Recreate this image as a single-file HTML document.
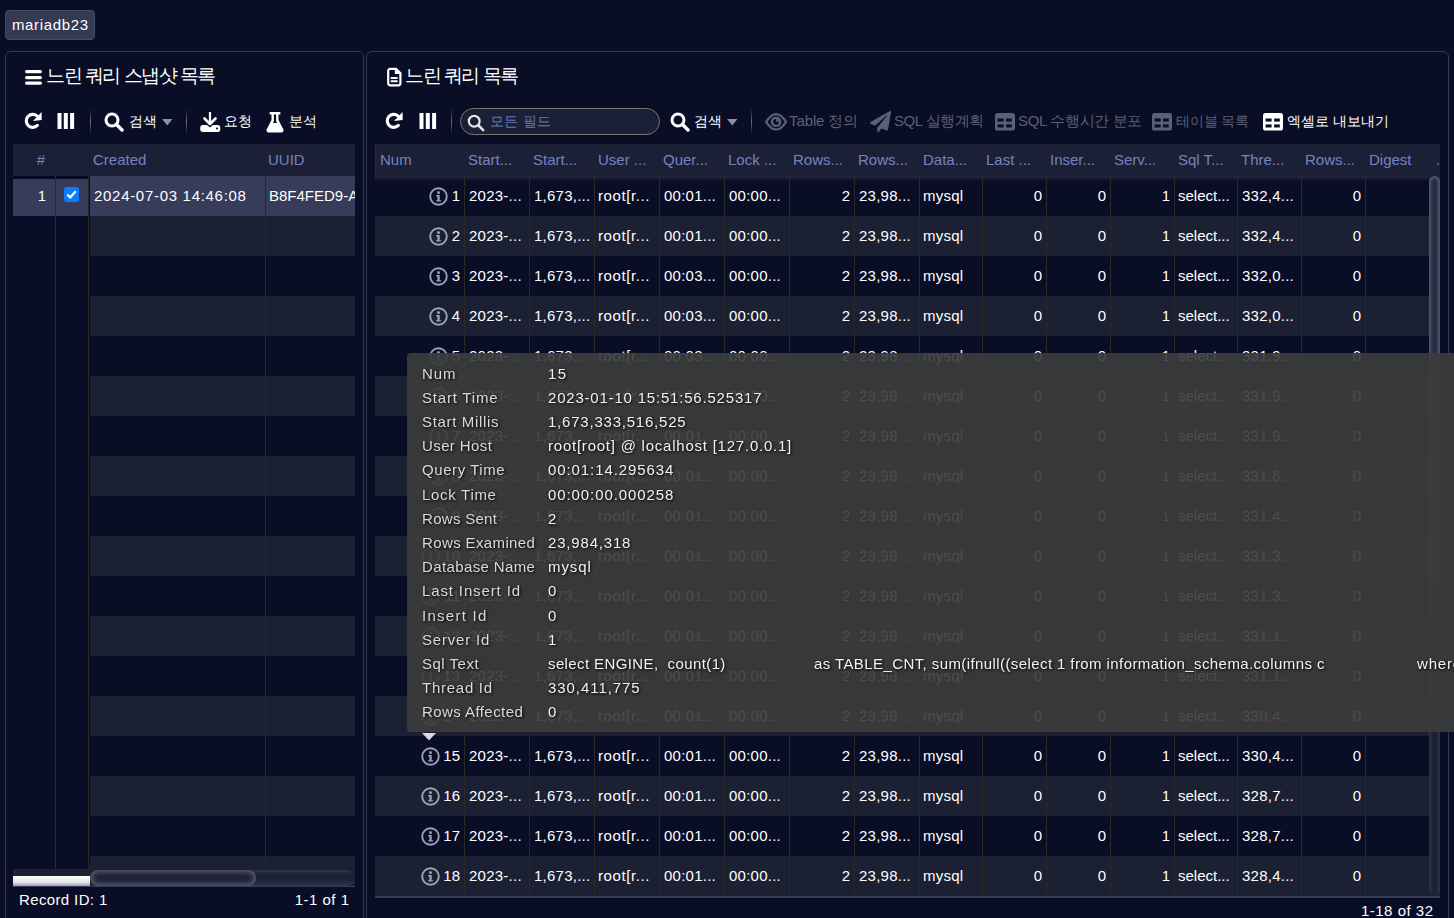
<!DOCTYPE html>
<html><head><meta charset="utf-8"><title>slow query</title><style>
*{box-sizing:border-box;margin:0;padding:0}
html,body{width:1454px;height:918px;overflow:hidden;background:#090d26;font-family:"Liberation Sans", sans-serif;color:#fff}
.a{position:absolute}
.ic{position:absolute;display:block}
.sep{position:absolute;width:1px;background:linear-gradient(to bottom, rgba(120,120,120,0), #6e6e6e 50%, rgba(120,120,120,0))}
.tb{position:absolute;font-size:15px;line-height:20px;white-space:nowrap;color:#fff}
.tbd{position:absolute;font-size:15px;line-height:20px;white-space:nowrap;color:#5c6076}
.title{position:absolute;font-size:19px;letter-spacing:-1.5px;line-height:24px;white-space:nowrap;color:#fff}
.panel{position:absolute;border:1px solid #333954;border-radius:6px}
.hd{position:absolute;background:#1c2036}
.ht{position:absolute;font-size:15px;line-height:32px;color:#7682c0;white-space:nowrap;overflow:hidden}
.row{position:absolute;height:40px}
.c{position:absolute;font-size:15px;line-height:40px;white-space:nowrap;overflow:hidden;color:#fff}
.r{text-align:right}
.vl{position:absolute;width:1px;background:#282825}
.tip{position:absolute;font-size:15px;line-height:24px;white-space:nowrap;color:#f2f2f2;text-shadow:1px 1px 3px #000}
</style></head>
<body>
<div class="a" style="left:5px;top:10px;width:90px;height:30px;background:#343a52;border:1px solid #464c66;border-radius:4px;font-size:15px;line-height:28px;text-align:center;color:#fff;letter-spacing:0.65px;text-indent:0.65px">mariadb23</div>
<div class="panel" style="left:5px;top:51px;width:359px;height:900px"></div>
<div class="panel" style="left:366px;top:51px;width:1083px;height:900px"></div>
<svg class="ic" style="left:25px;top:70px" width="18" height="15" viewBox="0 0 18 15"><rect x="0" y="0" width="17" height="3.2" rx="1.6" fill="#fff"/><rect x="0" y="6" width="17" height="3.2" rx="1.6" fill="#fff"/><rect x="0" y="11.5" width="17" height="3.2" rx="1.6" fill="#fff"/></svg>
<div class="title" style="left:46px;top:64px;">느린 쿼리 스냅샷 목록</div>
<svg class="ic" style="left:23px;top:109px" width="20" height="20" viewBox="0 0 20 20"><path d="M13.93 6.87 A6.5 6.5 0 1 0 14.35 16.45" fill="none" stroke="#fff" stroke-width="3.1" stroke-linecap="round"/><path d="M18.6 2.9 L18.6 11.1 L10 11.9 Z" fill="#fff"/></svg>
<svg class="ic" style="left:57px;top:113px" width="18" height="17" viewBox="0 0 18 17"><rect x="0.5" y="0" width="4" height="16" fill="#fff"/><rect x="6.8" y="0" width="4" height="16" fill="#fff"/><rect x="13.1" y="0" width="4" height="16" fill="#fff"/></svg>
<div class="sep" style="left:90px;top:108px;height:27px"></div>
<svg class="ic" style="left:104px;top:112px" width="20" height="20" viewBox="0 0 20 20"><circle cx="8" cy="8" r="6" fill="none" stroke="#fff" stroke-width="3"/><path d="M12.5 12.5 L18 18" stroke="#fff" stroke-width="3.4" stroke-linecap="round"/></svg>
<div class="tb" style="left:129px;top:111px;font-size:14px">검색</div>
<svg class="ic" style="left:162px;top:119px" width="11" height="7" viewBox="0 0 11 7"><path d="M0 0 L10.5 0 L5.25 6.5 Z" fill="#8c92a4"/></svg>
<div class="sep" style="left:186px;top:108px;height:27px"></div>
<svg class="ic" style="left:200px;top:112px" width="21" height="21" viewBox="0 0 21 21"><path d="M10 0.5 L10 11" stroke="#fff" stroke-width="2.2" stroke-linecap="round"/><path d="M4.5 6.5 L10 12 L15.5 6.5" fill="none" stroke="#fff" stroke-width="2.6" stroke-linecap="round" stroke-linejoin="round"/><path d="M2.5 13 L7 13 L10 15.5 L13 13 L18 13 A2.5 2.5 0 0 1 20.3 15.5 L20.3 17.5 A2.5 2.5 0 0 1 18 20 L2.5 20 A2.5 2.5 0 0 1 0.2 17.5 L0.2 15.5 A2.5 2.5 0 0 1 2.5 13 Z" fill="#fff"/><circle cx="17" cy="16.5" r="1" fill="#090d26"/></svg>
<div class="tb" style="left:224px;top:111px;font-size:14px">요청</div>
<svg class="ic" style="left:266px;top:112px" width="18" height="21" viewBox="0 0 18 21"><rect x="3.5" y="0" width="11" height="2.6" rx="1" fill="#fff"/><path d="M5.5 2 L5.5 8 L0.6 17.5 A2.2 2.2 0 0 0 2.6 20.5 L15.4 20.5 A2.2 2.2 0 0 0 17.4 17.5 L12.5 8 L12.5 2 Z" fill="#fff"/><path d="M7.9 2.5 L7.9 9 L7 11 L11 11 L10.1 9 L10.1 2.5 Z" fill="#090d26"/></svg>
<div class="tb" style="left:289px;top:111px;font-size:14px">분석</div>
<div class="hd" style="left:13px;top:144px;width:342px;height:32px"></div>
<div class="a" style="left:13px;top:176px;width:76px;height:3px;background:#080c22"></div>
<div class="ht" style="left:20px;top:144px;width:42px;text-align:center">#</div>
<div class="ht" style="left:93px;top:144px;width:170px">Created</div>
<div class="ht" style="left:268px;top:144px;width:87px">UUID</div>
<div class="row" style="left:90px;top:176px;width:265px;height:40px;background:#363c5a"></div>
<div class="row" style="left:90px;top:216px;width:265px;height:40px;background:#1c2033"></div>
<div class="row" style="left:90px;top:256px;width:265px;height:40px;background:#090d26"></div>
<div class="row" style="left:90px;top:296px;width:265px;height:40px;background:#1c2033"></div>
<div class="row" style="left:90px;top:336px;width:265px;height:40px;background:#090d26"></div>
<div class="row" style="left:90px;top:376px;width:265px;height:40px;background:#1c2033"></div>
<div class="row" style="left:90px;top:416px;width:265px;height:40px;background:#090d26"></div>
<div class="row" style="left:90px;top:456px;width:265px;height:40px;background:#1c2033"></div>
<div class="row" style="left:90px;top:496px;width:265px;height:40px;background:#090d26"></div>
<div class="row" style="left:90px;top:536px;width:265px;height:40px;background:#1c2033"></div>
<div class="row" style="left:90px;top:576px;width:265px;height:40px;background:#090d26"></div>
<div class="row" style="left:90px;top:616px;width:265px;height:40px;background:#1c2033"></div>
<div class="row" style="left:90px;top:656px;width:265px;height:40px;background:#090d26"></div>
<div class="row" style="left:90px;top:696px;width:265px;height:40px;background:#1c2033"></div>
<div class="row" style="left:90px;top:736px;width:265px;height:40px;background:#090d26"></div>
<div class="row" style="left:90px;top:776px;width:265px;height:40px;background:#1c2033"></div>
<div class="row" style="left:90px;top:816px;width:265px;height:40px;background:#090d26"></div>
<div class="row" style="left:90px;top:856px;width:265px;height:13px;background:#1c2033"></div>
<div class="row" style="left:13px;top:179px;width:76px;height:37px;background:#363c5a"></div>
<div class="c r" style="left:13px;top:176px;width:33px">1</div>
<div class="a" style="left:64px;top:187px;width:15px;height:15px;background:#0b7dfd;border-radius:3px"></div>
<svg class="ic" style="left:64px;top:187px" width="15" height="15" viewBox="0 0 15 15"><path d="M3.3 7.6 L6.2 10.5 L11.8 4.2" fill="none" stroke="#fff" stroke-width="2.2"/></svg>
<div class="c" style="left:94px;top:176px;width:170px;letter-spacing:0.7px">2024-07-03 14:46:08</div>
<div class="c" style="left:269px;top:176px;width:86px">B8F4FED9-A</div>
<div class="vl" style="left:55px;top:176px;height:693px"></div>
<div class="vl" style="left:88px;top:176px;height:693px"></div>
<div class="vl" style="left:265px;top:176px;height:693px"></div>
<div class="vl" style="left:89px;top:144px;height:32px;background:#181b2c"></div>
<div class="a" style="left:13px;top:869px;width:342px;height:17px;background:#1c2035"></div>
<div class="a" style="left:13px;top:876px;width:77px;height:10px;background:linear-gradient(#ffffff,#e8e8ec 60%,#9a9cb0)"></div>
<div class="a" style="left:13px;top:886px;width:342px;height:1px;background:#343a58"></div>
<div class="a" style="left:90px;top:870px;width:265px;height:16px;border-radius:8px;background:linear-gradient(#31354a,#1d2134 30%,#1d2134 60%,#2f3658);"></div>
<div class="a" style="left:90px;top:870px;width:166px;height:16px;border-radius:8px;background:#1f2338;box-shadow:inset 0 0 5px 2px #5a5e72"></div>
<div class="tb" style="left:19px;top:890px;letter-spacing:0.37px">Record ID: 1</div>
<div class="tb" style="left:249px;top:890px;width:100.5px;text-align:right;letter-spacing:0.49px">1-1 of 1</div>
<svg class="ic" style="left:386px;top:67px" width="17" height="21" viewBox="0 0 17 21"><path d="M4.2 1.9 L10 1.9 L14.4 6.3 L14.4 16.3 A2 2 0 0 1 12.4 18.3 L4.2 18.3 A2 2 0 0 1 2.2 16.3 L2.2 3.9 A2 2 0 0 1 4.2 1.9 Z" fill="none" stroke="#fff" stroke-width="2.2" stroke-linejoin="round"/><path d="M8.9 1.2 L8.9 6.9 L15.2 6.9 L15.2 5.8 L10.4 1.2 Z" fill="#fff"/><rect x="4.5" y="10" width="7.4" height="2" rx="1" fill="#fff"/><rect x="4.5" y="13.2" width="7.4" height="2.1" rx="1" fill="#fff"/></svg>
<div class="title" style="left:405px;top:64px;">느린 쿼리 목록</div>
<svg class="ic" style="left:384px;top:109px" width="20" height="20" viewBox="0 0 20 20"><path d="M13.93 6.87 A6.5 6.5 0 1 0 14.35 16.45" fill="none" stroke="#fff" stroke-width="3.1" stroke-linecap="round"/><path d="M18.6 2.9 L18.6 11.1 L10 11.9 Z" fill="#fff"/></svg>
<svg class="ic" style="left:419px;top:113px" width="18" height="17" viewBox="0 0 18 17"><rect x="0.5" y="0" width="4" height="16" fill="#fff"/><rect x="6.8" y="0" width="4" height="16" fill="#fff"/><rect x="13.1" y="0" width="4" height="16" fill="#fff"/></svg>
<div class="sep" style="left:451px;top:108px;height:27px"></div>
<div class="a" style="left:460px;top:108px;width:200px;height:27px;border:1px solid #7a766c;border-radius:14px;background:#1c2036"></div>
<svg class="ic" style="left:467px;top:114px" width="18" height="18" viewBox="0 0 20 20"><circle cx="8" cy="8" r="6" fill="none" stroke="#e6e6e6" stroke-width="2.4"/><path d="M12.5 12.5 L18 18" stroke="#e6e6e6" stroke-width="2.8" stroke-linecap="round"/></svg>
<div class="tb" style="left:490px;top:111px;color:#6a78b2;font-size:14px;letter-spacing:0.3px">모든 필드</div>
<svg class="ic" style="left:670px;top:112px" width="20" height="20" viewBox="0 0 20 20"><circle cx="8" cy="8" r="6" fill="none" stroke="#fff" stroke-width="3"/><path d="M12.5 12.5 L18 18" stroke="#fff" stroke-width="3.4" stroke-linecap="round"/></svg>
<div class="tb" style="left:694px;top:111px;font-size:14px">검색</div>
<svg class="ic" style="left:727px;top:119px" width="11" height="7" viewBox="0 0 11 7"><path d="M0 0 L10.5 0 L5.25 6.5 Z" fill="#8c92a4"/></svg>
<div class="sep" style="left:751px;top:108px;height:27px"></div>
<svg class="ic" style="left:764px;top:112px" width="24" height="20" viewBox="0 0 24 20"><path d="M2.1 9.8 Q12.1 -5.6 22.1 9.8 Q12.1 25.2 2.1 9.8 Z" fill="none" stroke="#5c6076" stroke-width="2.2" stroke-linejoin="round"/><circle cx="12.1" cy="9.8" r="4.1" fill="none" stroke="#5c6076" stroke-width="2.4"/><path d="M12.1 9.8 L12.1 6.8 A3 3 0 0 1 15.1 9.8 Z" fill="#5c6076"/></svg>
<div class="tbd" style="left:789px;top:111px;letter-spacing:-0.1px">Table 정의</div>
<svg class="ic" style="left:870px;top:111px" width="21" height="21" viewBox="0 0 512 512"><path d="M476 3.2L12.5 270.6c-18.1 10.4-15.8 35.6 2.2 43.2L121 358.4l287.3-253.2c5.5-4.9 13.3 2.6 8.6 8.3L176 407v80.5c0 23.6 28.5 32.9 42.5 15.8L282 426l124.6 52.2c14.2 6 30.4-2.9 33-18.2l72-432C515 7.8 493.3-6.8 476 3.2z" fill="#5c6076"/></svg>
<div class="tbd" style="left:894px;top:111px;letter-spacing:-0.5px">SQL 실행계획</div>
<svg class="ic" style="left:995px;top:113px" width="20" height="18" viewBox="0 0 20 18"><rect x="0" y="0" width="20" height="17.6" rx="2.6" fill="#5c6076"/><rect x="2.6" y="5.5" width="6" height="3.1" fill="#090d26"/><rect x="11.1" y="5.5" width="5.7" height="3.1" fill="#090d26"/><rect x="2.6" y="11.4" width="6" height="3.1" fill="#090d26"/><rect x="11.1" y="11.4" width="5.7" height="3.1" fill="#090d26"/></svg>
<div class="tbd" style="left:1018px;top:111px;letter-spacing:-0.35px">SQL 수행시간 분포</div>
<svg class="ic" style="left:1152px;top:113px" width="20" height="18" viewBox="0 0 20 18"><rect x="0" y="0" width="20" height="17.6" rx="2.6" fill="#5c6076"/><rect x="2.6" y="5.5" width="6" height="3.1" fill="#090d26"/><rect x="11.1" y="5.5" width="5.7" height="3.1" fill="#090d26"/><rect x="2.6" y="11.4" width="6" height="3.1" fill="#090d26"/><rect x="11.1" y="11.4" width="5.7" height="3.1" fill="#090d26"/></svg>
<div class="tbd" style="left:1176px;top:111px;font-size:14px;letter-spacing:-0.1px">테이블 목록</div>
<svg class="ic" style="left:1263px;top:113px" width="20" height="18" viewBox="0 0 20 18"><rect x="0" y="0" width="20" height="17.6" rx="2.6" fill="#fff"/><rect x="2.6" y="5.5" width="6" height="3.1" fill="#090d26"/><rect x="11.1" y="5.5" width="5.7" height="3.1" fill="#090d26"/><rect x="2.6" y="11.4" width="6" height="3.1" fill="#090d26"/><rect x="11.1" y="11.4" width="5.7" height="3.1" fill="#090d26"/></svg>
<div class="tb" style="left:1287px;top:111px;font-size:14px;letter-spacing:-0.05px">엑셀로 내보내기</div>
<div class="hd" style="left:375px;top:144px;width:1065px;height:32px"></div>
<div class="a" style="left:375px;top:144px;width:2px;height:32px;background:linear-gradient(to right,#2c2f42,rgba(28,32,54,0))"></div>
<div class="ht" style="left:380px;top:144px;width:86px">Num</div>
<div class="ht" style="left:468px;top:144px;width:61px">Start...</div>
<div class="ht" style="left:533px;top:144px;width:61px">Start...</div>
<div class="ht" style="left:598px;top:144px;width:61px">User ...</div>
<div class="ht" style="left:663px;top:144px;width:61px">Quer...</div>
<div class="ht" style="left:728px;top:144px;width:61px">Lock ...</div>
<div class="ht" style="left:793px;top:144px;width:61px">Rows...</div>
<div class="ht" style="left:858px;top:144px;width:61px">Rows...</div>
<div class="ht" style="left:923px;top:144px;width:59px">Data...</div>
<div class="ht" style="left:986px;top:144px;width:60px">Last ...</div>
<div class="ht" style="left:1050px;top:144px;width:60px">Inser...</div>
<div class="ht" style="left:1114px;top:144px;width:60px">Serv...</div>
<div class="ht" style="left:1178px;top:144px;width:59px">Sql T...</div>
<div class="ht" style="left:1241px;top:144px;width:60px">Thre...</div>
<div class="ht" style="left:1305px;top:144px;width:60px">Rows...</div>
<div class="ht" style="left:1369px;top:144px;width:59px">Digest</div>
<div class="ht" style="left:1436px;top:144px">.</div>
<div class="row" style="left:375px;top:176px;width:1054px;background:#090d26"></div>
<svg class="ic" style="left:429px;top:187px" width="20" height="20" viewBox="0 0 20 20"><circle cx="9.5" cy="9.5" r="8.3" fill="none" stroke="#9ca1b3" stroke-width="1.9"/><circle cx="9.5" cy="5.4" r="1.5" fill="#9ca1b3"/><path d="M7.3 8 L10.7 8 L10.7 13.2 L12 13.2 L12 14.6 L7.2 14.6 L7.2 13.2 L8.4 13.2 L8.4 9.4 L7.3 9.4 Z" fill="#9ca1b3"/></svg>
<div class="c r" style="left:375px;top:176px;width:85px">1</div>
<div class="c" style="left:469px;top:176px;width:61px;letter-spacing:0.25px">2023-...</div>
<div class="c" style="left:534px;top:176px;width:61px;letter-spacing:0.25px">1,673,...</div>
<div class="c" style="left:598px;top:176px;width:61px;letter-spacing:0.6px">root[r...</div>
<div class="c" style="left:664px;top:176px;width:61px;letter-spacing:0.25px">00:01...</div>
<div class="c" style="left:729px;top:176px;width:61px;letter-spacing:0.25px">00:00...</div>
<div class="c r" style="left:790px;top:176px;width:60px">2</div>
<div class="c" style="left:859px;top:176px;width:61px;letter-spacing:0.25px">23,98...</div>
<div class="c" style="left:923px;top:176px;width:59px;letter-spacing:0.25px">mysql</div>
<div class="c r" style="left:983px;top:176px;width:59px">0</div>
<div class="c r" style="left:1047px;top:176px;width:59px">0</div>
<div class="c r" style="left:1111px;top:176px;width:59px">1</div>
<div class="c" style="left:1178px;top:176px;width:59px;letter-spacing:0px">select...</div>
<div class="c" style="left:1242px;top:176px;width:60px;letter-spacing:0.25px">332,4...</div>
<div class="c r" style="left:1302px;top:176px;width:59px">0</div>
<div class="c" style="left:1369px;top:176px;width:59px;letter-spacing:0.25px"></div>
<div class="row" style="left:375px;top:216px;width:1054px;background:#1c2033"></div>
<svg class="ic" style="left:429px;top:227px" width="20" height="20" viewBox="0 0 20 20"><circle cx="9.5" cy="9.5" r="8.3" fill="none" stroke="#9ca1b3" stroke-width="1.9"/><circle cx="9.5" cy="5.4" r="1.5" fill="#9ca1b3"/><path d="M7.3 8 L10.7 8 L10.7 13.2 L12 13.2 L12 14.6 L7.2 14.6 L7.2 13.2 L8.4 13.2 L8.4 9.4 L7.3 9.4 Z" fill="#9ca1b3"/></svg>
<div class="c r" style="left:375px;top:216px;width:85px">2</div>
<div class="c" style="left:469px;top:216px;width:61px;letter-spacing:0.25px">2023-...</div>
<div class="c" style="left:534px;top:216px;width:61px;letter-spacing:0.25px">1,673,...</div>
<div class="c" style="left:598px;top:216px;width:61px;letter-spacing:0.6px">root[r...</div>
<div class="c" style="left:664px;top:216px;width:61px;letter-spacing:0.25px">00:01...</div>
<div class="c" style="left:729px;top:216px;width:61px;letter-spacing:0.25px">00:00...</div>
<div class="c r" style="left:790px;top:216px;width:60px">2</div>
<div class="c" style="left:859px;top:216px;width:61px;letter-spacing:0.25px">23,98...</div>
<div class="c" style="left:923px;top:216px;width:59px;letter-spacing:0.25px">mysql</div>
<div class="c r" style="left:983px;top:216px;width:59px">0</div>
<div class="c r" style="left:1047px;top:216px;width:59px">0</div>
<div class="c r" style="left:1111px;top:216px;width:59px">1</div>
<div class="c" style="left:1178px;top:216px;width:59px;letter-spacing:0px">select...</div>
<div class="c" style="left:1242px;top:216px;width:60px;letter-spacing:0.25px">332,4...</div>
<div class="c r" style="left:1302px;top:216px;width:59px">0</div>
<div class="c" style="left:1369px;top:216px;width:59px;letter-spacing:0.25px"></div>
<div class="row" style="left:375px;top:256px;width:1054px;background:#090d26"></div>
<svg class="ic" style="left:429px;top:267px" width="20" height="20" viewBox="0 0 20 20"><circle cx="9.5" cy="9.5" r="8.3" fill="none" stroke="#9ca1b3" stroke-width="1.9"/><circle cx="9.5" cy="5.4" r="1.5" fill="#9ca1b3"/><path d="M7.3 8 L10.7 8 L10.7 13.2 L12 13.2 L12 14.6 L7.2 14.6 L7.2 13.2 L8.4 13.2 L8.4 9.4 L7.3 9.4 Z" fill="#9ca1b3"/></svg>
<div class="c r" style="left:375px;top:256px;width:85px">3</div>
<div class="c" style="left:469px;top:256px;width:61px;letter-spacing:0.25px">2023-...</div>
<div class="c" style="left:534px;top:256px;width:61px;letter-spacing:0.25px">1,673,...</div>
<div class="c" style="left:598px;top:256px;width:61px;letter-spacing:0.6px">root[r...</div>
<div class="c" style="left:664px;top:256px;width:61px;letter-spacing:0.25px">00:03...</div>
<div class="c" style="left:729px;top:256px;width:61px;letter-spacing:0.25px">00:00...</div>
<div class="c r" style="left:790px;top:256px;width:60px">2</div>
<div class="c" style="left:859px;top:256px;width:61px;letter-spacing:0.25px">23,98...</div>
<div class="c" style="left:923px;top:256px;width:59px;letter-spacing:0.25px">mysql</div>
<div class="c r" style="left:983px;top:256px;width:59px">0</div>
<div class="c r" style="left:1047px;top:256px;width:59px">0</div>
<div class="c r" style="left:1111px;top:256px;width:59px">1</div>
<div class="c" style="left:1178px;top:256px;width:59px;letter-spacing:0px">select...</div>
<div class="c" style="left:1242px;top:256px;width:60px;letter-spacing:0.25px">332,0...</div>
<div class="c r" style="left:1302px;top:256px;width:59px">0</div>
<div class="c" style="left:1369px;top:256px;width:59px;letter-spacing:0.25px"></div>
<div class="row" style="left:375px;top:296px;width:1054px;background:#1c2033"></div>
<svg class="ic" style="left:429px;top:307px" width="20" height="20" viewBox="0 0 20 20"><circle cx="9.5" cy="9.5" r="8.3" fill="none" stroke="#9ca1b3" stroke-width="1.9"/><circle cx="9.5" cy="5.4" r="1.5" fill="#9ca1b3"/><path d="M7.3 8 L10.7 8 L10.7 13.2 L12 13.2 L12 14.6 L7.2 14.6 L7.2 13.2 L8.4 13.2 L8.4 9.4 L7.3 9.4 Z" fill="#9ca1b3"/></svg>
<div class="c r" style="left:375px;top:296px;width:85px">4</div>
<div class="c" style="left:469px;top:296px;width:61px;letter-spacing:0.25px">2023-...</div>
<div class="c" style="left:534px;top:296px;width:61px;letter-spacing:0.25px">1,673,...</div>
<div class="c" style="left:598px;top:296px;width:61px;letter-spacing:0.6px">root[r...</div>
<div class="c" style="left:664px;top:296px;width:61px;letter-spacing:0.25px">00:03...</div>
<div class="c" style="left:729px;top:296px;width:61px;letter-spacing:0.25px">00:00...</div>
<div class="c r" style="left:790px;top:296px;width:60px">2</div>
<div class="c" style="left:859px;top:296px;width:61px;letter-spacing:0.25px">23,98...</div>
<div class="c" style="left:923px;top:296px;width:59px;letter-spacing:0.25px">mysql</div>
<div class="c r" style="left:983px;top:296px;width:59px">0</div>
<div class="c r" style="left:1047px;top:296px;width:59px">0</div>
<div class="c r" style="left:1111px;top:296px;width:59px">1</div>
<div class="c" style="left:1178px;top:296px;width:59px;letter-spacing:0px">select...</div>
<div class="c" style="left:1242px;top:296px;width:60px;letter-spacing:0.25px">332,0...</div>
<div class="c r" style="left:1302px;top:296px;width:59px">0</div>
<div class="c" style="left:1369px;top:296px;width:59px;letter-spacing:0.25px"></div>
<div class="row" style="left:375px;top:336px;width:1054px;background:#090d26"></div>
<svg class="ic" style="left:429px;top:347px" width="20" height="20" viewBox="0 0 20 20"><circle cx="9.5" cy="9.5" r="8.3" fill="none" stroke="#9ca1b3" stroke-width="1.9"/><circle cx="9.5" cy="5.4" r="1.5" fill="#9ca1b3"/><path d="M7.3 8 L10.7 8 L10.7 13.2 L12 13.2 L12 14.6 L7.2 14.6 L7.2 13.2 L8.4 13.2 L8.4 9.4 L7.3 9.4 Z" fill="#9ca1b3"/></svg>
<div class="c r" style="left:375px;top:336px;width:85px">5</div>
<div class="c" style="left:469px;top:336px;width:61px;letter-spacing:0.25px">2023-...</div>
<div class="c" style="left:534px;top:336px;width:61px;letter-spacing:0.25px">1,673,...</div>
<div class="c" style="left:598px;top:336px;width:61px;letter-spacing:0.6px">root[r...</div>
<div class="c" style="left:664px;top:336px;width:61px;letter-spacing:0.25px">00:03...</div>
<div class="c" style="left:729px;top:336px;width:61px;letter-spacing:0.25px">00:00...</div>
<div class="c r" style="left:790px;top:336px;width:60px">2</div>
<div class="c" style="left:859px;top:336px;width:61px;letter-spacing:0.25px">23,98...</div>
<div class="c" style="left:923px;top:336px;width:59px;letter-spacing:0.25px">mysql</div>
<div class="c r" style="left:983px;top:336px;width:59px">0</div>
<div class="c r" style="left:1047px;top:336px;width:59px">0</div>
<div class="c r" style="left:1111px;top:336px;width:59px">1</div>
<div class="c" style="left:1178px;top:336px;width:59px;letter-spacing:0px">select...</div>
<div class="c" style="left:1242px;top:336px;width:60px;letter-spacing:0.25px">331,9...</div>
<div class="c r" style="left:1302px;top:336px;width:59px">0</div>
<div class="c" style="left:1369px;top:336px;width:59px;letter-spacing:0.25px"></div>
<div class="row" style="left:375px;top:376px;width:1054px;background:#1c2033"></div>
<svg class="ic" style="left:429px;top:387px" width="20" height="20" viewBox="0 0 20 20"><circle cx="9.5" cy="9.5" r="8.3" fill="none" stroke="#9ca1b3" stroke-width="1.9"/><circle cx="9.5" cy="5.4" r="1.5" fill="#9ca1b3"/><path d="M7.3 8 L10.7 8 L10.7 13.2 L12 13.2 L12 14.6 L7.2 14.6 L7.2 13.2 L8.4 13.2 L8.4 9.4 L7.3 9.4 Z" fill="#9ca1b3"/></svg>
<div class="c r" style="left:375px;top:376px;width:85px">6</div>
<div class="c" style="left:469px;top:376px;width:61px;letter-spacing:0.25px">2023-...</div>
<div class="c" style="left:534px;top:376px;width:61px;letter-spacing:0.25px">1,673,...</div>
<div class="c" style="left:598px;top:376px;width:61px;letter-spacing:0.6px">root[r...</div>
<div class="c" style="left:664px;top:376px;width:61px;letter-spacing:0.25px">00:01...</div>
<div class="c" style="left:729px;top:376px;width:61px;letter-spacing:0.25px">00:00...</div>
<div class="c r" style="left:790px;top:376px;width:60px">2</div>
<div class="c" style="left:859px;top:376px;width:61px;letter-spacing:0.25px">23,98...</div>
<div class="c" style="left:923px;top:376px;width:59px;letter-spacing:0.25px">mysql</div>
<div class="c r" style="left:983px;top:376px;width:59px">0</div>
<div class="c r" style="left:1047px;top:376px;width:59px">0</div>
<div class="c r" style="left:1111px;top:376px;width:59px">1</div>
<div class="c" style="left:1178px;top:376px;width:59px;letter-spacing:0px">select...</div>
<div class="c" style="left:1242px;top:376px;width:60px;letter-spacing:0.25px">331,9...</div>
<div class="c r" style="left:1302px;top:376px;width:59px">0</div>
<div class="c" style="left:1369px;top:376px;width:59px;letter-spacing:0.25px"></div>
<div class="row" style="left:375px;top:416px;width:1054px;background:#090d26"></div>
<svg class="ic" style="left:429px;top:427px" width="20" height="20" viewBox="0 0 20 20"><circle cx="9.5" cy="9.5" r="8.3" fill="none" stroke="#9ca1b3" stroke-width="1.9"/><circle cx="9.5" cy="5.4" r="1.5" fill="#9ca1b3"/><path d="M7.3 8 L10.7 8 L10.7 13.2 L12 13.2 L12 14.6 L7.2 14.6 L7.2 13.2 L8.4 13.2 L8.4 9.4 L7.3 9.4 Z" fill="#9ca1b3"/></svg>
<div class="c r" style="left:375px;top:416px;width:85px">7</div>
<div class="c" style="left:469px;top:416px;width:61px;letter-spacing:0.25px">2023-...</div>
<div class="c" style="left:534px;top:416px;width:61px;letter-spacing:0.25px">1,673,...</div>
<div class="c" style="left:598px;top:416px;width:61px;letter-spacing:0.6px">root[r...</div>
<div class="c" style="left:664px;top:416px;width:61px;letter-spacing:0.25px">00:01...</div>
<div class="c" style="left:729px;top:416px;width:61px;letter-spacing:0.25px">00:00...</div>
<div class="c r" style="left:790px;top:416px;width:60px">2</div>
<div class="c" style="left:859px;top:416px;width:61px;letter-spacing:0.25px">23,98...</div>
<div class="c" style="left:923px;top:416px;width:59px;letter-spacing:0.25px">mysql</div>
<div class="c r" style="left:983px;top:416px;width:59px">0</div>
<div class="c r" style="left:1047px;top:416px;width:59px">0</div>
<div class="c r" style="left:1111px;top:416px;width:59px">1</div>
<div class="c" style="left:1178px;top:416px;width:59px;letter-spacing:0px">select...</div>
<div class="c" style="left:1242px;top:416px;width:60px;letter-spacing:0.25px">331,9...</div>
<div class="c r" style="left:1302px;top:416px;width:59px">0</div>
<div class="c" style="left:1369px;top:416px;width:59px;letter-spacing:0.25px"></div>
<div class="row" style="left:375px;top:456px;width:1054px;background:#1c2033"></div>
<svg class="ic" style="left:429px;top:467px" width="20" height="20" viewBox="0 0 20 20"><circle cx="9.5" cy="9.5" r="8.3" fill="none" stroke="#9ca1b3" stroke-width="1.9"/><circle cx="9.5" cy="5.4" r="1.5" fill="#9ca1b3"/><path d="M7.3 8 L10.7 8 L10.7 13.2 L12 13.2 L12 14.6 L7.2 14.6 L7.2 13.2 L8.4 13.2 L8.4 9.4 L7.3 9.4 Z" fill="#9ca1b3"/></svg>
<div class="c r" style="left:375px;top:456px;width:85px">8</div>
<div class="c" style="left:469px;top:456px;width:61px;letter-spacing:0.25px">2023-...</div>
<div class="c" style="left:534px;top:456px;width:61px;letter-spacing:0.25px">1,673,...</div>
<div class="c" style="left:598px;top:456px;width:61px;letter-spacing:0.6px">root[r...</div>
<div class="c" style="left:664px;top:456px;width:61px;letter-spacing:0.25px">00:01...</div>
<div class="c" style="left:729px;top:456px;width:61px;letter-spacing:0.25px">00:00...</div>
<div class="c r" style="left:790px;top:456px;width:60px">2</div>
<div class="c" style="left:859px;top:456px;width:61px;letter-spacing:0.25px">23,98...</div>
<div class="c" style="left:923px;top:456px;width:59px;letter-spacing:0.25px">mysql</div>
<div class="c r" style="left:983px;top:456px;width:59px">0</div>
<div class="c r" style="left:1047px;top:456px;width:59px">0</div>
<div class="c r" style="left:1111px;top:456px;width:59px">1</div>
<div class="c" style="left:1178px;top:456px;width:59px;letter-spacing:0px">select...</div>
<div class="c" style="left:1242px;top:456px;width:60px;letter-spacing:0.25px">331,6...</div>
<div class="c r" style="left:1302px;top:456px;width:59px">0</div>
<div class="c" style="left:1369px;top:456px;width:59px;letter-spacing:0.25px"></div>
<div class="row" style="left:375px;top:496px;width:1054px;background:#090d26"></div>
<svg class="ic" style="left:429px;top:507px" width="20" height="20" viewBox="0 0 20 20"><circle cx="9.5" cy="9.5" r="8.3" fill="none" stroke="#9ca1b3" stroke-width="1.9"/><circle cx="9.5" cy="5.4" r="1.5" fill="#9ca1b3"/><path d="M7.3 8 L10.7 8 L10.7 13.2 L12 13.2 L12 14.6 L7.2 14.6 L7.2 13.2 L8.4 13.2 L8.4 9.4 L7.3 9.4 Z" fill="#9ca1b3"/></svg>
<div class="c r" style="left:375px;top:496px;width:85px">9</div>
<div class="c" style="left:469px;top:496px;width:61px;letter-spacing:0.25px">2023-...</div>
<div class="c" style="left:534px;top:496px;width:61px;letter-spacing:0.25px">1,673,...</div>
<div class="c" style="left:598px;top:496px;width:61px;letter-spacing:0.6px">root[r...</div>
<div class="c" style="left:664px;top:496px;width:61px;letter-spacing:0.25px">00:01...</div>
<div class="c" style="left:729px;top:496px;width:61px;letter-spacing:0.25px">00:00...</div>
<div class="c r" style="left:790px;top:496px;width:60px">2</div>
<div class="c" style="left:859px;top:496px;width:61px;letter-spacing:0.25px">23,98...</div>
<div class="c" style="left:923px;top:496px;width:59px;letter-spacing:0.25px">mysql</div>
<div class="c r" style="left:983px;top:496px;width:59px">0</div>
<div class="c r" style="left:1047px;top:496px;width:59px">0</div>
<div class="c r" style="left:1111px;top:496px;width:59px">1</div>
<div class="c" style="left:1178px;top:496px;width:59px;letter-spacing:0px">select...</div>
<div class="c" style="left:1242px;top:496px;width:60px;letter-spacing:0.25px">331,4...</div>
<div class="c r" style="left:1302px;top:496px;width:59px">0</div>
<div class="c" style="left:1369px;top:496px;width:59px;letter-spacing:0.25px"></div>
<div class="row" style="left:375px;top:536px;width:1054px;background:#1c2033"></div>
<svg class="ic" style="left:421px;top:547px" width="20" height="20" viewBox="0 0 20 20"><circle cx="9.5" cy="9.5" r="8.3" fill="none" stroke="#9ca1b3" stroke-width="1.9"/><circle cx="9.5" cy="5.4" r="1.5" fill="#9ca1b3"/><path d="M7.3 8 L10.7 8 L10.7 13.2 L12 13.2 L12 14.6 L7.2 14.6 L7.2 13.2 L8.4 13.2 L8.4 9.4 L7.3 9.4 Z" fill="#9ca1b3"/></svg>
<div class="c r" style="left:375px;top:536px;width:85px">10</div>
<div class="c" style="left:469px;top:536px;width:61px;letter-spacing:0.25px">2023-...</div>
<div class="c" style="left:534px;top:536px;width:61px;letter-spacing:0.25px">1,673,...</div>
<div class="c" style="left:598px;top:536px;width:61px;letter-spacing:0.6px">root[r...</div>
<div class="c" style="left:664px;top:536px;width:61px;letter-spacing:0.25px">00:01...</div>
<div class="c" style="left:729px;top:536px;width:61px;letter-spacing:0.25px">00:00...</div>
<div class="c r" style="left:790px;top:536px;width:60px">2</div>
<div class="c" style="left:859px;top:536px;width:61px;letter-spacing:0.25px">23,98...</div>
<div class="c" style="left:923px;top:536px;width:59px;letter-spacing:0.25px">mysql</div>
<div class="c r" style="left:983px;top:536px;width:59px">0</div>
<div class="c r" style="left:1047px;top:536px;width:59px">0</div>
<div class="c r" style="left:1111px;top:536px;width:59px">1</div>
<div class="c" style="left:1178px;top:536px;width:59px;letter-spacing:0px">select...</div>
<div class="c" style="left:1242px;top:536px;width:60px;letter-spacing:0.25px">331,3...</div>
<div class="c r" style="left:1302px;top:536px;width:59px">0</div>
<div class="c" style="left:1369px;top:536px;width:59px;letter-spacing:0.25px"></div>
<div class="row" style="left:375px;top:576px;width:1054px;background:#090d26"></div>
<svg class="ic" style="left:421px;top:587px" width="20" height="20" viewBox="0 0 20 20"><circle cx="9.5" cy="9.5" r="8.3" fill="none" stroke="#9ca1b3" stroke-width="1.9"/><circle cx="9.5" cy="5.4" r="1.5" fill="#9ca1b3"/><path d="M7.3 8 L10.7 8 L10.7 13.2 L12 13.2 L12 14.6 L7.2 14.6 L7.2 13.2 L8.4 13.2 L8.4 9.4 L7.3 9.4 Z" fill="#9ca1b3"/></svg>
<div class="c r" style="left:375px;top:576px;width:85px">11</div>
<div class="c" style="left:469px;top:576px;width:61px;letter-spacing:0.25px">2023-...</div>
<div class="c" style="left:534px;top:576px;width:61px;letter-spacing:0.25px">1,673,...</div>
<div class="c" style="left:598px;top:576px;width:61px;letter-spacing:0.6px">root[r...</div>
<div class="c" style="left:664px;top:576px;width:61px;letter-spacing:0.25px">00:01...</div>
<div class="c" style="left:729px;top:576px;width:61px;letter-spacing:0.25px">00:00...</div>
<div class="c r" style="left:790px;top:576px;width:60px">2</div>
<div class="c" style="left:859px;top:576px;width:61px;letter-spacing:0.25px">23,98...</div>
<div class="c" style="left:923px;top:576px;width:59px;letter-spacing:0.25px">mysql</div>
<div class="c r" style="left:983px;top:576px;width:59px">0</div>
<div class="c r" style="left:1047px;top:576px;width:59px">0</div>
<div class="c r" style="left:1111px;top:576px;width:59px">1</div>
<div class="c" style="left:1178px;top:576px;width:59px;letter-spacing:0px">select...</div>
<div class="c" style="left:1242px;top:576px;width:60px;letter-spacing:0.25px">331,3...</div>
<div class="c r" style="left:1302px;top:576px;width:59px">0</div>
<div class="c" style="left:1369px;top:576px;width:59px;letter-spacing:0.25px"></div>
<div class="row" style="left:375px;top:616px;width:1054px;background:#1c2033"></div>
<svg class="ic" style="left:421px;top:627px" width="20" height="20" viewBox="0 0 20 20"><circle cx="9.5" cy="9.5" r="8.3" fill="none" stroke="#9ca1b3" stroke-width="1.9"/><circle cx="9.5" cy="5.4" r="1.5" fill="#9ca1b3"/><path d="M7.3 8 L10.7 8 L10.7 13.2 L12 13.2 L12 14.6 L7.2 14.6 L7.2 13.2 L8.4 13.2 L8.4 9.4 L7.3 9.4 Z" fill="#9ca1b3"/></svg>
<div class="c r" style="left:375px;top:616px;width:85px">12</div>
<div class="c" style="left:469px;top:616px;width:61px;letter-spacing:0.25px">2023-...</div>
<div class="c" style="left:534px;top:616px;width:61px;letter-spacing:0.25px">1,673,...</div>
<div class="c" style="left:598px;top:616px;width:61px;letter-spacing:0.6px">root[r...</div>
<div class="c" style="left:664px;top:616px;width:61px;letter-spacing:0.25px">00:01...</div>
<div class="c" style="left:729px;top:616px;width:61px;letter-spacing:0.25px">00:00...</div>
<div class="c r" style="left:790px;top:616px;width:60px">2</div>
<div class="c" style="left:859px;top:616px;width:61px;letter-spacing:0.25px">23,98...</div>
<div class="c" style="left:923px;top:616px;width:59px;letter-spacing:0.25px">mysql</div>
<div class="c r" style="left:983px;top:616px;width:59px">0</div>
<div class="c r" style="left:1047px;top:616px;width:59px">0</div>
<div class="c r" style="left:1111px;top:616px;width:59px">1</div>
<div class="c" style="left:1178px;top:616px;width:59px;letter-spacing:0px">select...</div>
<div class="c" style="left:1242px;top:616px;width:60px;letter-spacing:0.25px">331,1...</div>
<div class="c r" style="left:1302px;top:616px;width:59px">0</div>
<div class="c" style="left:1369px;top:616px;width:59px;letter-spacing:0.25px"></div>
<div class="row" style="left:375px;top:656px;width:1054px;background:#090d26"></div>
<svg class="ic" style="left:421px;top:667px" width="20" height="20" viewBox="0 0 20 20"><circle cx="9.5" cy="9.5" r="8.3" fill="none" stroke="#9ca1b3" stroke-width="1.9"/><circle cx="9.5" cy="5.4" r="1.5" fill="#9ca1b3"/><path d="M7.3 8 L10.7 8 L10.7 13.2 L12 13.2 L12 14.6 L7.2 14.6 L7.2 13.2 L8.4 13.2 L8.4 9.4 L7.3 9.4 Z" fill="#9ca1b3"/></svg>
<div class="c r" style="left:375px;top:656px;width:85px">13</div>
<div class="c" style="left:469px;top:656px;width:61px;letter-spacing:0.25px">2023-...</div>
<div class="c" style="left:534px;top:656px;width:61px;letter-spacing:0.25px">1,673,...</div>
<div class="c" style="left:598px;top:656px;width:61px;letter-spacing:0.6px">root[r...</div>
<div class="c" style="left:664px;top:656px;width:61px;letter-spacing:0.25px">00:01...</div>
<div class="c" style="left:729px;top:656px;width:61px;letter-spacing:0.25px">00:00...</div>
<div class="c r" style="left:790px;top:656px;width:60px">2</div>
<div class="c" style="left:859px;top:656px;width:61px;letter-spacing:0.25px">23,98...</div>
<div class="c" style="left:923px;top:656px;width:59px;letter-spacing:0.25px">mysql</div>
<div class="c r" style="left:983px;top:656px;width:59px">0</div>
<div class="c r" style="left:1047px;top:656px;width:59px">0</div>
<div class="c r" style="left:1111px;top:656px;width:59px">1</div>
<div class="c" style="left:1178px;top:656px;width:59px;letter-spacing:0px">select...</div>
<div class="c" style="left:1242px;top:656px;width:60px;letter-spacing:0.25px">331,1...</div>
<div class="c r" style="left:1302px;top:656px;width:59px">0</div>
<div class="c" style="left:1369px;top:656px;width:59px;letter-spacing:0.25px"></div>
<div class="row" style="left:375px;top:696px;width:1054px;background:#1c2033"></div>
<svg class="ic" style="left:421px;top:707px" width="20" height="20" viewBox="0 0 20 20"><circle cx="9.5" cy="9.5" r="8.3" fill="none" stroke="#9ca1b3" stroke-width="1.9"/><circle cx="9.5" cy="5.4" r="1.5" fill="#9ca1b3"/><path d="M7.3 8 L10.7 8 L10.7 13.2 L12 13.2 L12 14.6 L7.2 14.6 L7.2 13.2 L8.4 13.2 L8.4 9.4 L7.3 9.4 Z" fill="#9ca1b3"/></svg>
<div class="c r" style="left:375px;top:696px;width:85px">14</div>
<div class="c" style="left:469px;top:696px;width:61px;letter-spacing:0.25px">2023-...</div>
<div class="c" style="left:534px;top:696px;width:61px;letter-spacing:0.25px">1,673,...</div>
<div class="c" style="left:598px;top:696px;width:61px;letter-spacing:0.6px">root[r...</div>
<div class="c" style="left:664px;top:696px;width:61px;letter-spacing:0.25px">00:01...</div>
<div class="c" style="left:729px;top:696px;width:61px;letter-spacing:0.25px">00:00...</div>
<div class="c r" style="left:790px;top:696px;width:60px">2</div>
<div class="c" style="left:859px;top:696px;width:61px;letter-spacing:0.25px">23,98...</div>
<div class="c" style="left:923px;top:696px;width:59px;letter-spacing:0.25px">mysql</div>
<div class="c r" style="left:983px;top:696px;width:59px">0</div>
<div class="c r" style="left:1047px;top:696px;width:59px">0</div>
<div class="c r" style="left:1111px;top:696px;width:59px">1</div>
<div class="c" style="left:1178px;top:696px;width:59px;letter-spacing:0px">select...</div>
<div class="c" style="left:1242px;top:696px;width:60px;letter-spacing:0.25px">330,4...</div>
<div class="c r" style="left:1302px;top:696px;width:59px">0</div>
<div class="c" style="left:1369px;top:696px;width:59px;letter-spacing:0.25px"></div>
<div class="row" style="left:375px;top:736px;width:1054px;background:#090d26"></div>
<svg class="ic" style="left:421px;top:747px" width="20" height="20" viewBox="0 0 20 20"><circle cx="9.5" cy="9.5" r="8.3" fill="none" stroke="#9ca1b3" stroke-width="1.9"/><circle cx="9.5" cy="5.4" r="1.5" fill="#9ca1b3"/><path d="M7.3 8 L10.7 8 L10.7 13.2 L12 13.2 L12 14.6 L7.2 14.6 L7.2 13.2 L8.4 13.2 L8.4 9.4 L7.3 9.4 Z" fill="#9ca1b3"/></svg>
<div class="c r" style="left:375px;top:736px;width:85px">15</div>
<div class="c" style="left:469px;top:736px;width:61px;letter-spacing:0.25px">2023-...</div>
<div class="c" style="left:534px;top:736px;width:61px;letter-spacing:0.25px">1,673,...</div>
<div class="c" style="left:598px;top:736px;width:61px;letter-spacing:0.6px">root[r...</div>
<div class="c" style="left:664px;top:736px;width:61px;letter-spacing:0.25px">00:01...</div>
<div class="c" style="left:729px;top:736px;width:61px;letter-spacing:0.25px">00:00...</div>
<div class="c r" style="left:790px;top:736px;width:60px">2</div>
<div class="c" style="left:859px;top:736px;width:61px;letter-spacing:0.25px">23,98...</div>
<div class="c" style="left:923px;top:736px;width:59px;letter-spacing:0.25px">mysql</div>
<div class="c r" style="left:983px;top:736px;width:59px">0</div>
<div class="c r" style="left:1047px;top:736px;width:59px">0</div>
<div class="c r" style="left:1111px;top:736px;width:59px">1</div>
<div class="c" style="left:1178px;top:736px;width:59px;letter-spacing:0px">select...</div>
<div class="c" style="left:1242px;top:736px;width:60px;letter-spacing:0.25px">330,4...</div>
<div class="c r" style="left:1302px;top:736px;width:59px">0</div>
<div class="c" style="left:1369px;top:736px;width:59px;letter-spacing:0.25px"></div>
<div class="row" style="left:375px;top:776px;width:1054px;background:#1c2033"></div>
<svg class="ic" style="left:421px;top:787px" width="20" height="20" viewBox="0 0 20 20"><circle cx="9.5" cy="9.5" r="8.3" fill="none" stroke="#9ca1b3" stroke-width="1.9"/><circle cx="9.5" cy="5.4" r="1.5" fill="#9ca1b3"/><path d="M7.3 8 L10.7 8 L10.7 13.2 L12 13.2 L12 14.6 L7.2 14.6 L7.2 13.2 L8.4 13.2 L8.4 9.4 L7.3 9.4 Z" fill="#9ca1b3"/></svg>
<div class="c r" style="left:375px;top:776px;width:85px">16</div>
<div class="c" style="left:469px;top:776px;width:61px;letter-spacing:0.25px">2023-...</div>
<div class="c" style="left:534px;top:776px;width:61px;letter-spacing:0.25px">1,673,...</div>
<div class="c" style="left:598px;top:776px;width:61px;letter-spacing:0.6px">root[r...</div>
<div class="c" style="left:664px;top:776px;width:61px;letter-spacing:0.25px">00:01...</div>
<div class="c" style="left:729px;top:776px;width:61px;letter-spacing:0.25px">00:00...</div>
<div class="c r" style="left:790px;top:776px;width:60px">2</div>
<div class="c" style="left:859px;top:776px;width:61px;letter-spacing:0.25px">23,98...</div>
<div class="c" style="left:923px;top:776px;width:59px;letter-spacing:0.25px">mysql</div>
<div class="c r" style="left:983px;top:776px;width:59px">0</div>
<div class="c r" style="left:1047px;top:776px;width:59px">0</div>
<div class="c r" style="left:1111px;top:776px;width:59px">1</div>
<div class="c" style="left:1178px;top:776px;width:59px;letter-spacing:0px">select...</div>
<div class="c" style="left:1242px;top:776px;width:60px;letter-spacing:0.25px">328,7...</div>
<div class="c r" style="left:1302px;top:776px;width:59px">0</div>
<div class="c" style="left:1369px;top:776px;width:59px;letter-spacing:0.25px"></div>
<div class="row" style="left:375px;top:816px;width:1054px;background:#090d26"></div>
<svg class="ic" style="left:421px;top:827px" width="20" height="20" viewBox="0 0 20 20"><circle cx="9.5" cy="9.5" r="8.3" fill="none" stroke="#9ca1b3" stroke-width="1.9"/><circle cx="9.5" cy="5.4" r="1.5" fill="#9ca1b3"/><path d="M7.3 8 L10.7 8 L10.7 13.2 L12 13.2 L12 14.6 L7.2 14.6 L7.2 13.2 L8.4 13.2 L8.4 9.4 L7.3 9.4 Z" fill="#9ca1b3"/></svg>
<div class="c r" style="left:375px;top:816px;width:85px">17</div>
<div class="c" style="left:469px;top:816px;width:61px;letter-spacing:0.25px">2023-...</div>
<div class="c" style="left:534px;top:816px;width:61px;letter-spacing:0.25px">1,673,...</div>
<div class="c" style="left:598px;top:816px;width:61px;letter-spacing:0.6px">root[r...</div>
<div class="c" style="left:664px;top:816px;width:61px;letter-spacing:0.25px">00:01...</div>
<div class="c" style="left:729px;top:816px;width:61px;letter-spacing:0.25px">00:00...</div>
<div class="c r" style="left:790px;top:816px;width:60px">2</div>
<div class="c" style="left:859px;top:816px;width:61px;letter-spacing:0.25px">23,98...</div>
<div class="c" style="left:923px;top:816px;width:59px;letter-spacing:0.25px">mysql</div>
<div class="c r" style="left:983px;top:816px;width:59px">0</div>
<div class="c r" style="left:1047px;top:816px;width:59px">0</div>
<div class="c r" style="left:1111px;top:816px;width:59px">1</div>
<div class="c" style="left:1178px;top:816px;width:59px;letter-spacing:0px">select...</div>
<div class="c" style="left:1242px;top:816px;width:60px;letter-spacing:0.25px">328,7...</div>
<div class="c r" style="left:1302px;top:816px;width:59px">0</div>
<div class="c" style="left:1369px;top:816px;width:59px;letter-spacing:0.25px"></div>
<div class="row" style="left:375px;top:856px;width:1054px;background:#1c2033"></div>
<svg class="ic" style="left:421px;top:867px" width="20" height="20" viewBox="0 0 20 20"><circle cx="9.5" cy="9.5" r="8.3" fill="none" stroke="#9ca1b3" stroke-width="1.9"/><circle cx="9.5" cy="5.4" r="1.5" fill="#9ca1b3"/><path d="M7.3 8 L10.7 8 L10.7 13.2 L12 13.2 L12 14.6 L7.2 14.6 L7.2 13.2 L8.4 13.2 L8.4 9.4 L7.3 9.4 Z" fill="#9ca1b3"/></svg>
<div class="c r" style="left:375px;top:856px;width:85px">18</div>
<div class="c" style="left:469px;top:856px;width:61px;letter-spacing:0.25px">2023-...</div>
<div class="c" style="left:534px;top:856px;width:61px;letter-spacing:0.25px">1,673,...</div>
<div class="c" style="left:598px;top:856px;width:61px;letter-spacing:0.6px">root[r...</div>
<div class="c" style="left:664px;top:856px;width:61px;letter-spacing:0.25px">00:01...</div>
<div class="c" style="left:729px;top:856px;width:61px;letter-spacing:0.25px">00:00...</div>
<div class="c r" style="left:790px;top:856px;width:60px">2</div>
<div class="c" style="left:859px;top:856px;width:61px;letter-spacing:0.25px">23,98...</div>
<div class="c" style="left:923px;top:856px;width:59px;letter-spacing:0.25px">mysql</div>
<div class="c r" style="left:983px;top:856px;width:59px">0</div>
<div class="c r" style="left:1047px;top:856px;width:59px">0</div>
<div class="c r" style="left:1111px;top:856px;width:59px">1</div>
<div class="c" style="left:1178px;top:856px;width:59px;letter-spacing:0px">select...</div>
<div class="c" style="left:1242px;top:856px;width:60px;letter-spacing:0.25px">328,4...</div>
<div class="c r" style="left:1302px;top:856px;width:59px">0</div>
<div class="c" style="left:1369px;top:856px;width:59px;letter-spacing:0.25px"></div>
<div class="a" style="left:375px;top:176px;width:1054px;height:5px;background:linear-gradient(#25283a,rgba(9,13,38,0))"></div>
<div class="vl" style="left:464px;top:176px;height:720px"></div>
<div class="vl" style="left:529px;top:176px;height:720px"></div>
<div class="vl" style="left:594px;top:176px;height:720px"></div>
<div class="vl" style="left:659px;top:176px;height:720px"></div>
<div class="vl" style="left:724px;top:176px;height:720px"></div>
<div class="vl" style="left:789px;top:176px;height:720px"></div>
<div class="vl" style="left:854px;top:176px;height:720px"></div>
<div class="vl" style="left:919px;top:176px;height:720px"></div>
<div class="vl" style="left:982px;top:176px;height:720px"></div>
<div class="vl" style="left:1046px;top:176px;height:720px"></div>
<div class="vl" style="left:1110px;top:176px;height:720px"></div>
<div class="vl" style="left:1174px;top:176px;height:720px"></div>
<div class="vl" style="left:1237px;top:176px;height:720px"></div>
<div class="vl" style="left:1301px;top:176px;height:720px"></div>
<div class="vl" style="left:1365px;top:176px;height:720px"></div>
<div class="a" style="left:375px;top:896px;width:1065px;height:2px;background:#363e60"></div>
<div class="a" style="left:1429px;top:176px;width:11px;height:720px;background:#1c2035"></div>
<div class="a" style="left:1429px;top:176px;width:11px;height:720px;border-radius:6px;background:linear-gradient(to right,#303447,#1d2134 35%,#1d2134 65%,#303447)"></div>
<div class="a" style="left:1429px;top:176px;width:11px;height:408px;border-radius:6px;background:#262b40;box-shadow:inset 0 0 3px 2px #555a70"></div>
<div class="tb" style="left:1333px;top:901px;width:100.5px;text-align:right;letter-spacing:0.5px">1-18 of 32</div>
<div class="a" style="left:0;top:0;width:1454px;height:918px;will-change:transform"><div class="a" style="left:407px;top:353px;width:1100px;height:379px;background:rgba(60,60,60,0.92);border-radius:4px"></div><div class="tip" style="left:422px;top:361.5px;letter-spacing:0.9px;color:#dadada">Num</div><div class="tip" style="left:548px;top:361.5px;letter-spacing:1.4px">15</div><div class="tip" style="left:422px;top:385.7px;letter-spacing:0.8px;color:#dadada">Start Time</div><div class="tip" style="left:548px;top:385.7px;letter-spacing:0.8px">2023-01-10 15:51:56.525317</div><div class="tip" style="left:422px;top:409.9px;letter-spacing:0.66px;color:#dadada">Start Millis</div><div class="tip" style="left:548px;top:409.9px;letter-spacing:0.78px">1,673,333,516,525</div><div class="tip" style="left:422px;top:434.1px;letter-spacing:0.4px;color:#dadada">User Host</div><div class="tip" style="left:548px;top:434.1px;letter-spacing:0.77px">root[root] @ localhost [127.0.0.1]</div><div class="tip" style="left:422px;top:458.3px;letter-spacing:0.57px;color:#dadada">Query Time</div><div class="tip" style="left:548px;top:458.3px;letter-spacing:0.91px">00:01:14.295634</div><div class="tip" style="left:422px;top:482.5px;letter-spacing:0.7px;color:#dadada">Lock Time</div><div class="tip" style="left:548px;top:482.5px;letter-spacing:0.91px">00:00:00.000258</div><div class="tip" style="left:422px;top:506.7px;letter-spacing:0.3px;color:#dadada">Rows Sent</div><div class="tip" style="left:548px;top:506.7px;letter-spacing:0px">2</div><div class="tip" style="left:422px;top:530.9px;letter-spacing:0.375px;color:#dadada">Rows Examined</div><div class="tip" style="left:548px;top:530.9px;letter-spacing:0.82px">23,984,318</div><div class="tip" style="left:422px;top:555.1px;letter-spacing:0.38px;color:#dadada">Database Name</div><div class="tip" style="left:548px;top:555.1px;letter-spacing:0.92px">mysql</div><div class="tip" style="left:422px;top:579.3px;letter-spacing:0.87px;color:#dadada">Last Insert Id</div><div class="tip" style="left:548px;top:579.3px;letter-spacing:0px">0</div><div class="tip" style="left:422px;top:603.5px;letter-spacing:1.26px;color:#dadada">Insert Id</div><div class="tip" style="left:548px;top:603.5px;letter-spacing:0px">0</div><div class="tip" style="left:422px;top:627.7px;letter-spacing:0.81px;color:#dadada">Server Id</div><div class="tip" style="left:548px;top:627.7px;letter-spacing:0px">1</div><div class="tip" style="left:422px;top:651.9px;letter-spacing:0.5px;color:#dadada">Sql Text</div><div class="tip" style="left:548px;top:651.9px;letter-spacing:0.39px">select ENGINE,&nbsp; count(1)</div><div class="tip" style="left:814px;top:651.9px;letter-spacing:0.41px">as TABLE_CNT, sum(ifnull((select 1 from information_schema.columns c</div><div class="tip" style="left:1417px;top:651.9px;letter-spacing:0.8px">where</div><div class="tip" style="left:422px;top:676.1px;letter-spacing:0.74px;color:#dadada">Thread Id</div><div class="tip" style="left:548px;top:676.1px;letter-spacing:0.94px">330,411,775</div><div class="tip" style="left:422px;top:700.3px;letter-spacing:0.43px;color:#dadada">Rows Affected</div><div class="tip" style="left:548px;top:700.3px;letter-spacing:0px">0</div><svg class="ic" style="left:422px;top:733px" width="14" height="8" viewBox="0 0 14 8"><path d="M0 0 L14 0 L7 7.5 Z" fill="#d9d9dd"/></svg></div>
</body></html>
